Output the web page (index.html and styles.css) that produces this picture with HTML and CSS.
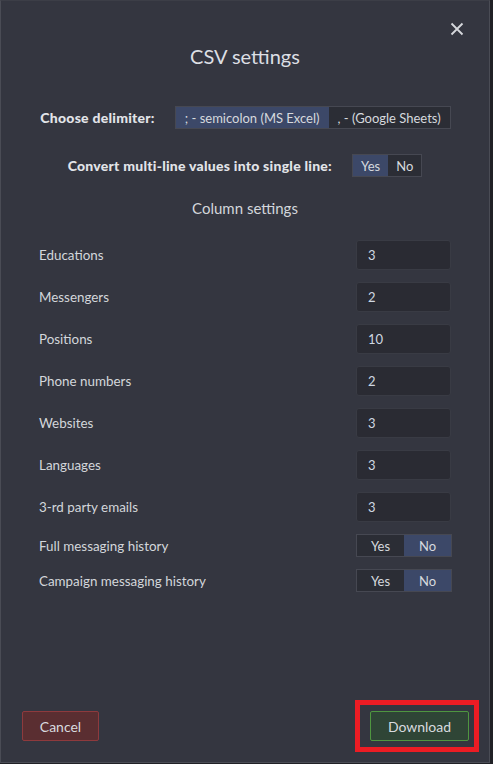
FILE: index.html
```html
<!DOCTYPE html>
<html lang="en">
<head>
    <meta charset="UTF-8">
    <meta name="viewport" content="width=device-width, initial-scale=1.0">
    <title>CSV settings</title>
    <link rel="stylesheet" href="styles.css">
</head>
<body>
    <div class="modal">
        <button class="close-button" aria-label="Close">
            <svg width="14" height="14" viewBox="0 0 14 14">
                <path d="M1.5 1.5 L12.5 12.5 M12.5 1.5 L1.5 12.5" stroke="#d6d8dc" stroke-width="1.8" fill="none"/>
            </svg>
        </button>

        <h2 class="title">CSV settings</h2>

        <div class="option-row delimiter-row">
            <span class="option-label">Choose delimiter:</span>
            <div class="segmented">
                <span class="segment active">; - semicolon (MS Excel)</span>
                <span class="segment">, - (Google Sheets)</span>
            </div>
        </div>

        <div class="option-row multiline-row">
            <span class="option-label">Convert multi-line values into single line:</span>
            <div class="segmented">
                <span class="segment small active">Yes</span>
                <span class="segment small">No</span>
            </div>
        </div>

        <h3 class="subtitle">Column settings</h3>

        <div class="columns">
            <div class="column-row">
                <label for="educations">Educations</label>
                <input type="text" id="educations" value="3">
            </div>
            <div class="column-row">
                <label for="messengers">Messengers</label>
                <input type="text" id="messengers" value="2">
            </div>
            <div class="column-row">
                <label for="positions">Positions</label>
                <input type="text" id="positions" value="10">
            </div>
            <div class="column-row">
                <label for="phones">Phone numbers</label>
                <input type="text" id="phones" value="2">
            </div>
            <div class="column-row">
                <label for="websites">Websites</label>
                <input type="text" id="websites" value="3">
            </div>
            <div class="column-row">
                <label for="languages">Languages</label>
                <input type="text" id="languages" value="3">
            </div>
            <div class="column-row">
                <label for="emails">3-rd party emails</label>
                <input type="text" id="emails" value="3">
            </div>
            <div class="column-row toggle-row">
                <label>Full messaging history</label>
                <div class="segmented wide">
                    <span class="segment">Yes</span>
                    <span class="segment active">No</span>
                </div>
            </div>
            <div class="column-row toggle-row">
                <label>Campaign messaging history</label>
                <div class="segmented wide">
                    <span class="segment">Yes</span>
                    <span class="segment active">No</span>
                </div>
            </div>
        </div>

        <div class="footer">
            <button class="btn cancel-button">Cancel</button>
            <div class="highlight">
                <button class="btn download-button">Download</button>
            </div>
        </div>
    </div>
</body>
</html>
```

FILE: styles.css
```css
body {
    font-family: 'Lato', 'Open Sans', sans-serif;
    margin: 0;
    padding: 0;
    background-color: #202126;
    color: #d3d6db;
}
.modal {
    position: relative;
    width: 490px;
    height: 763px;
    box-sizing: border-box;
    background-color: #343640;
    border: 1px solid #4a4c55;
    border-top-color: #3c3e47;
    display: flex;
    flex-direction: column;
    padding: 43px 37px 0 37px;
}
.close-button {
    position: absolute;
    top: 21px;
    right: 25px;
    background: none;
    border: none;
    padding: 0;
    width: 14px;
    height: 14px;
    cursor: pointer;
}
.close-button svg {
    display: block;
}
.title {
    margin: 0;
    text-align: center;
    font-size: 20px;
    line-height: 24px;
    font-weight: 400;
    color: #dcdfe4;
}
.option-row {
    display: flex;
    justify-content: center;
    align-items: center;
    gap: 20px;
}
.delimiter-row {
    margin-top: 38px;
    padding-left: 1px;
}
.multiline-row {
    margin-top: 25px;
}
.option-label {
    font-weight: 900;
    font-size: 14px;
    letter-spacing: 0.25px;
    color: #e2e4e8;
}
.segmented {
    display: flex;
    height: 23px;
    border: 1px solid #464852;
    box-sizing: border-box;
    background-color: #2b2d35;
}
.segment {
    display: flex;
    align-items: center;
    justify-content: center;
    padding: 0 9px;
    font-size: 13px;
    color: #d6d9de;
}
.segment.active {
    background-color: #3c4868;
}
.segment.small {
    padding: 0 8px;
}
.segmented.wide .segment {
    width: 47px;
    padding: 0;
}
.subtitle {
    margin: 21px 0 0 0;
    text-align: center;
    font-size: 15px;
    line-height: 20px;
    font-weight: 400;
    color: #d3d6db;
}
.columns {
    margin-top: 22px;
    display: flex;
    flex-direction: column;
    gap: 12px;
}
.column-row {
    display: flex;
    justify-content: space-between;
    align-items: center;
    padding-left: 1px;
}
.column-row label {
    font-size: 13.4px;
    color: #d3d6db;
}
.column-row input {
    width: 95px;
    height: 30px;
    box-sizing: border-box;
    margin-right: 1px;
    padding: 0 11px;
    background-color: #2a2b33;
    border: 1px solid #393b44;
    border-radius: 3px;
    color: #cfd8e2;
    font-family: 'Lato', 'Open Sans', sans-serif;
    font-size: 13px;
}
.footer {
    margin-top: auto;
    margin-left: -16px;
    margin-right: -27px;
    margin-bottom: 10px;
    display: flex;
    justify-content: space-between;
    align-items: center;
}
.btn {
    height: 30px;
    box-sizing: border-box;
    font-family: 'Lato', 'Open Sans', sans-serif;
    font-size: 14px;
    color: #d8dadf;
    border-radius: 2px;
    cursor: pointer;
}
.cancel-button {
    width: 77px;
    background-color: #5a2e31;
    border: 1px solid #8e3a3d;
}
.download-button {
    width: 99px;
    background-color: #2f4536;
    border: 1px solid #4f9640;
    display: block;
}
.highlight {
    border: 5px solid #ec1c24;
    padding: 6px 5px 6px 10px;
}
```
